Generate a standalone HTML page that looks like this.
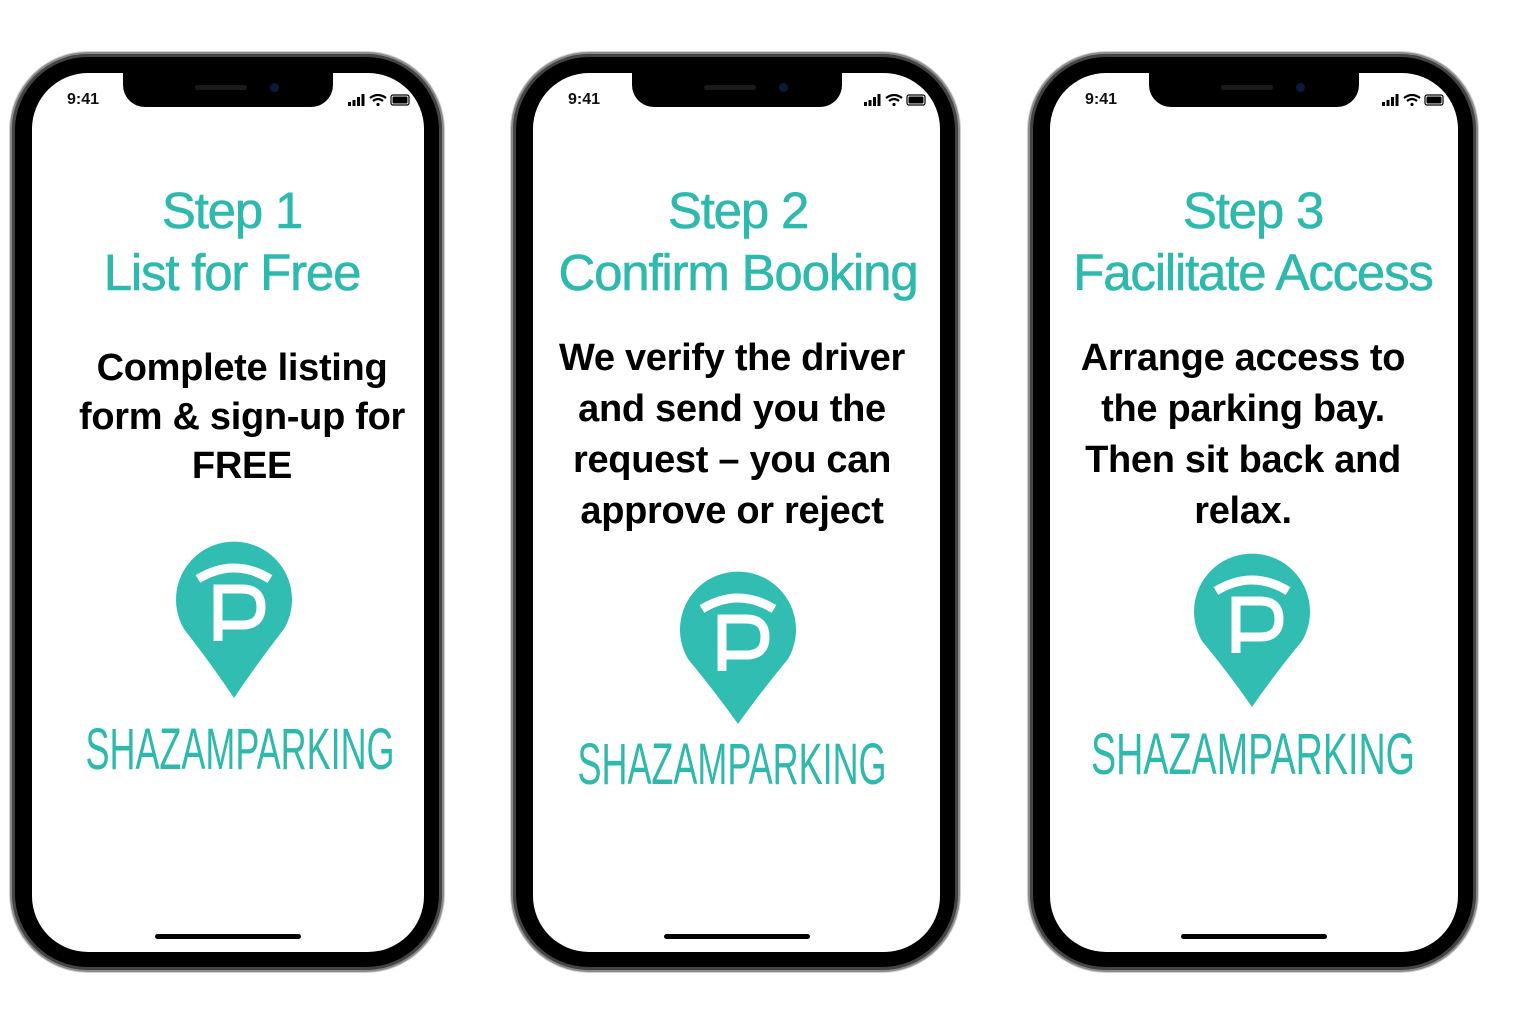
<!DOCTYPE html>
<html><head><meta charset="utf-8"><style>
*{margin:0;padding:0;box-sizing:border-box}
body{width:1536px;height:1024px;background:#fff;position:relative;overflow:hidden;font-family:"Liberation Sans",sans-serif}
.ph{position:absolute;top:52px;height:920px;border-radius:78px;background:#000;border:2px solid #8a8a8a;box-shadow:0 0 0 1px #d0d0d0, inset 0 0 0 3px #444}
.scr{position:absolute;left:20px;right:18px;top:19px;bottom:18px;background:#fff;border-radius:56px;overflow:hidden}
.notch{position:absolute;top:0;left:50%;width:210px;height:34px;margin-left:-105px;background:#000;border-radius:0 0 22px 22px}
.notch:after{content:"";position:absolute;left:72px;top:12px;width:52px;height:5px;border-radius:3px;background:#1a1a1a}
.cam{position:absolute;top:10px;left:147px;width:9px;height:9px;border-radius:50%;background:#0a1a3a}
.time{position:absolute;left:35px;top:18px;font-size:16px;font-weight:bold;color:#111}
.icons{position:absolute;right:14px;top:21px}
.home{position:absolute;bottom:13px;left:50%;width:146px;margin-left:-73px;height:5px;border-radius:3px;background:#000}
.t{position:absolute;left:-50px;right:-50px;text-align:center;color:#2fb9ad;font-size:51px;letter-spacing:-1.2px;line-height:62px;-webkit-text-stroke:0.6px #2fb9ad}
.b{position:absolute;left:-20px;right:-20px;text-align:center;color:#000;font-weight:bold;font-size:38px;letter-spacing:-0.3px}
.logo{position:absolute;left:-150px;right:-150px;text-align:center;color:#2fb9ad;font-size:58px;line-height:56px;white-space:nowrap;transform:scaleX(.62)}
.pin{position:absolute}
</style></head><body>

<div class="ph" style="left:10px;width:434px">
 <div class="scr">
  <div class="notch"><div class="cam"></div></div>
  <div class="time">9:41</div>
  <svg class="icons" width="62" height="12" viewBox="0 0 62 12"><rect x="0" y="8" width="3" height="4"/><rect x="4.5" y="6" width="3" height="6"/><rect x="9" y="3" width="3" height="9"/><rect x="13.5" y="0" width="3" height="12"/><path d="M22 4 Q30 -2 38 4 M25 7 Q30 3 35 7" stroke="#000" stroke-width="2.2" fill="none"/><circle cx="30" cy="10.5" r="1.6"/><rect x="43" y="1" width="18" height="10" rx="2" fill="none" stroke="#000" stroke-width="1.2"/><rect x="44.5" y="2.5" width="15" height="7" rx="1"/></svg>
  <div class="home"></div>
 </div>
</div>
<div class="ph" style="left:511px;width:449px">
 <div class="scr">
  <div class="notch"><div class="cam"></div></div>
  <div class="time">9:41</div>
  <svg class="icons" width="62" height="12" viewBox="0 0 62 12"><rect x="0" y="8" width="3" height="4"/><rect x="4.5" y="6" width="3" height="6"/><rect x="9" y="3" width="3" height="9"/><rect x="13.5" y="0" width="3" height="12"/><path d="M22 4 Q30 -2 38 4 M25 7 Q30 3 35 7" stroke="#000" stroke-width="2.2" fill="none"/><circle cx="30" cy="10.5" r="1.6"/><rect x="43" y="1" width="18" height="10" rx="2" fill="none" stroke="#000" stroke-width="1.2"/><rect x="44.5" y="2.5" width="15" height="7" rx="1"/></svg>
  <div class="home"></div>
 </div>
</div>
<div class="ph" style="left:1028px;width:450px">
 <div class="scr">
  <div class="notch"><div class="cam"></div></div>
  <div class="time">9:41</div>
  <svg class="icons" width="62" height="12" viewBox="0 0 62 12"><rect x="0" y="8" width="3" height="4"/><rect x="4.5" y="6" width="3" height="6"/><rect x="9" y="3" width="3" height="9"/><rect x="13.5" y="0" width="3" height="12"/><path d="M22 4 Q30 -2 38 4 M25 7 Q30 3 35 7" stroke="#000" stroke-width="2.2" fill="none"/><circle cx="30" cy="10.5" r="1.6"/><rect x="43" y="1" width="18" height="10" rx="2" fill="none" stroke="#000" stroke-width="1.2"/><rect x="44.5" y="2.5" width="15" height="7" rx="1"/></svg>
  <div class="home"></div>
 </div>
</div>

<div style="position:absolute;left:32px;width:400px;top:0;height:1024px">
 <div class="t" style="top:180px">Step 1<br>List for Free</div>
 <div class="b" style="top:344px;line-height:49px;left:-10px;right:-30px">Complete listing<br>form &amp; sign-up for<br>FREE</div>
 <svg class="pin" style="left:143px;top:540px" width="118" height="158" viewBox="-59 -59 118 158"><path d="M-50 30 A58 58 0 1 1 50 30 Q22 66 0 99 Q-22 66 -50 30Z" fill="#32bdb2"/><path d="M-36 -20 Q0 -42 36 -20" stroke="#fff" stroke-width="9" fill="none"/><path d="M-16 42 V-10 H8 Q27 -10 27 8 Q27 26 8 26 H-16" stroke="#fff" stroke-width="9" fill="none"/></svg>
 <div class="logo" style="top:722px;left:-134px;right:-150px">SHAZAMPARKING</div>
</div>
<div style="position:absolute;left:533px;width:410px;top:0;height:1024px">
 <div class="t" style="top:180px">Step 2<br>Confirm Booking</div>
 <div class="b" style="top:333px;line-height:51px;left:-26px;right:-14px">We verify the driver<br>and send you the<br>request – you can<br>approve or reject</div>
 <svg class="pin" style="left:146px;top:570px" width="118" height="154" viewBox="-59 -59 118 154"><path d="M-50 30 A58 58 0 1 1 50 30 Q22 64 0 95 Q-22 64 -50 30Z" fill="#32bdb2"/><path d="M-36 -20 Q0 -42 36 -20" stroke="#fff" stroke-width="9" fill="none"/><path d="M-16 42 V-10 H8 Q27 -10 27 8 Q27 26 8 26 H-16" stroke="#fff" stroke-width="9" fill="none"/></svg>
 <div class="logo" style="top:737px;left:-158px;right:-146px">SHAZAMPARKING</div>
</div>
<div style="position:absolute;left:1048px;width:410px;top:0;height:1024px">
 <div class="t" style="top:180px">Step 3<br>Facilitate Access</div>
 <div class="b" style="top:333px;line-height:51px;left:-30px;right:-10px">Arrange access to<br>the parking bay.<br>Then sit back and<br>relax.</div>
 <svg class="pin" style="left:145px;top:552px" width="118" height="156" viewBox="-59 -59 118 156"><path d="M-50 30 A58 58 0 1 1 50 30 Q22 64 0 96 Q-22 64 -50 30Z" fill="#32bdb2"/><path d="M-36 -20 Q0 -42 36 -20" stroke="#fff" stroke-width="9" fill="none"/><path d="M-16 42 V-10 H8 Q27 -10 27 8 Q27 26 8 26 H-16" stroke="#fff" stroke-width="9" fill="none"/></svg>
 <div class="logo" style="top:727px;transform:scaleX(.65)">SHAZAMPARKING</div>
</div>
</body></html>
